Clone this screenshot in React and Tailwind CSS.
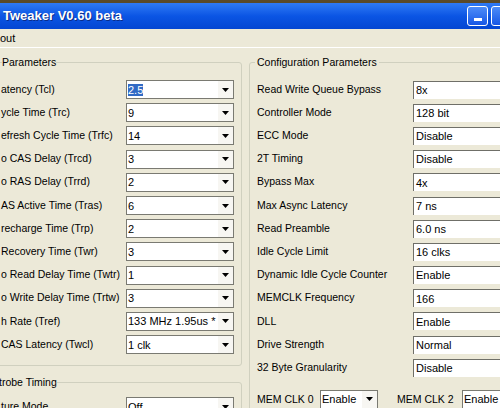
import React from "react";

const leftRows = [
  ["atency (Tcl)", "2.5", true],
  ["ycle Time (Trc)", "9"],
  ["efresh Cycle Time (Trfc)", "14"],
  ["o CAS Delay (Trcd)", "3"],
  ["o RAS Delay (Trrd)", "2"],
  ["AS Active Time (Tras)", "6"],
  ["recharge Time (Trp)", "2"],
  ["Recovery Time (Twr)", "3"],
  ["o Read Delay Time (Twtr)", "1"],
  ["o Write Delay Time (Trtw)", "3"],
  ["h Rate (Tref)", "133 MHz 1.95us *"],
  ["CAS Latency (Twcl)", "1 clk"],
];

const rightRows = [
  ["Read Write Queue Bypass", "8x"],
  ["Controller Mode", "128 bit"],
  ["ECC Mode", "Disable"],
  ["2T Timing", "Disable"],
  ["Bypass Max", "4x"],
  ["Max Async Latency", "7 ns"],
  ["Read Preamble", "6.0 ns"],
  ["Idle Cycle Limit", "16 clks"],
  ["Dynamic Idle Cycle Counter", "Enable"],
  ["MEMCLK Frequency", "166"],
  ["DLL", "Enable"],
  ["Drive Strength", "Normal"],
  ["32 Byte Granularity", "Disable"],
];

function Arrow() {
  return (
    <svg width="7" height="4" viewBox="0 0 7 4">
      <path d="M0 0h7L3.5 4z" fill="#000" />
    </svg>
  );
}

function Combo({ value, selected, width = "w-[108px]" }) {
  return (
    <div className={`flex h-[19px] shrink-0 items-center border border-[#7a7a72] bg-white ${width}`}>
      <div className="flex-1 overflow-hidden whitespace-nowrap pl-[1px] text-[11px] leading-[14px]">
        <span className={selected ? "bg-[#316ac5] text-white" : ""}>{value}</span>
      </div>
      <div className="flex h-full w-[15px] items-center justify-center bg-[#f7f6f2]">
        <Arrow />
      </div>
    </div>
  );
}

function Field({ value }) {
  return (
    <div className="flex h-[18px] w-[100px] shrink-0 items-center border-t border-l border-[#6f6f68] bg-white pl-[2px] text-[11px]">
      {value}
    </div>
  );
}

export default function App() {
  return (
    <div
      className="h-[408px] w-[500px] overflow-hidden bg-[#ece9d8] text-[10.5px] text-black"
      style={{ fontFamily: "Tahoma, 'Liberation Sans', Arial, sans-serif" }}
    >
      {/* title bar */}
      <div className="h-[3px] bg-[#5a4a2a]" />
      <div className="flex h-[26px] items-center justify-between bg-gradient-to-b from-[#2f7af5] via-[#0b55e4] to-[#0446d2] pl-[3px]">
        <span className="text-[13px] font-bold text-white [text-shadow:1px_1px_0_#0a2c8a]">
          Tweaker V0.60 beta
        </span>
        <div className="-mr-[12px] flex items-center gap-[3px]">
          <div className="flex h-[20px] w-[21px] items-end justify-center rounded-[3px] border border-white bg-gradient-to-b from-[#4d8cf8] to-[#1656e6] pb-[4px]">
            <div className="h-[3px] w-[8px] bg-white" />
          </div>
          <div className="h-[20px] w-[21px] rounded-[3px] border border-white bg-gradient-to-b from-[#4d8cf8] to-[#1656e6]" />
        </div>
      </div>

      {/* menu bar */}
      <div className="flex h-[19px] items-center border-b border-white text-[11px]">
        <span>out</span>
      </div>

      <div className="flex">
        {/* left column */}
        <div className="w-[249px] shrink-0">
          <fieldset className="-ml-[20px] mt-[8px] w-[262px] rounded-[3px] border border-[#d0d0bf] pb-[9px] pt-[9px]">
            <legend className="ml-[21px] leading-[13px]">Parameters</legend>
            {leftRows.map(([label, value, sel]) => (
              <div key={label} className="flex h-[23.2px] items-center">
                <div className="w-[145px] shrink-0 whitespace-nowrap pl-[20px]">{label}</div>
                <Combo value={value} selected={sel} />
              </div>
            ))}
          </fieldset>
          <fieldset className="-ml-[20px] mt-[10px] w-[262px] rounded-[3px] border border-[#d0d0bf] pt-[6px]">
            <legend className="ml-[18px] leading-[13px]">trobe Timing</legend>
            <div className="flex h-[23.2px] items-center">
              <div className="w-[145px] shrink-0 whitespace-nowrap pl-[20px]">ture Mode</div>
              <Combo value="Off" />
            </div>
          </fieldset>
        </div>

        {/* right column */}
        <div className="shrink-0">
          <fieldset className="mt-[8px] w-[270px] rounded-[3px] border border-[#d0d0bf] pl-[7px] pt-[9px]">
            <legend className="-ml-[2px] px-[2px] leading-[13px]">Configuration Parameters</legend>
            {rightRows.map(([label, value]) => (
              <div key={label} className="flex h-[23.2px] items-center">
                <div className="w-[156px] shrink-0 whitespace-nowrap">{label}</div>
                <Field value={value} />
              </div>
            ))}
            <div className="mt-[9px] flex h-[22px] items-center whitespace-nowrap">
              <span className="w-[63px] shrink-0">MEM CLK 0</span>
              <Combo value="Enable" width="w-[58px]" />
              <span className="ml-[19px] w-[65px] shrink-0">MEM CLK 2</span>
              <Combo value="Enable" width="w-[60px]" />
            </div>
          </fieldset>
        </div>
      </div>
    </div>
  );
}
